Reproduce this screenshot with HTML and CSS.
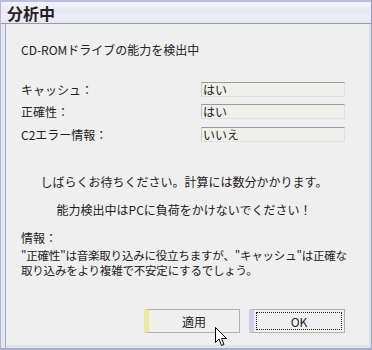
FILE: index.html
```html
<!DOCTYPE html>
<html lang="ja">
<head>
    <meta charset="UTF-8">
    <title>分析中</title>
    <link rel="stylesheet" href="styles.css">
</head>
<body>
    <div class="dialog">
        <div class="titlebar">分析中</div>

        <div class="content">
            <p class="status">CD-ROMドライブの能力を検出中</p>

            <div class="result-row">
                <span class="result-label">キャッシュ：</span>
                <span class="result-field">はい</span>
            </div>
            <div class="result-row">
                <span class="result-label">正確性：</span>
                <span class="result-field">はい</span>
            </div>
            <div class="result-row">
                <span class="result-label">C2エラー情報：</span>
                <span class="result-field">いいえ</span>
            </div>

            <p class="notice first">しばらくお待ちください。計算には数分かかります。</p>
            <p class="notice">能力検出中はPCに負荷をかけないでください！</p>

            <p class="info-title">情報：</p>
            <p class="info-text">"正確性"は音楽取り込みに役立ちますが、"キャッシュ"は正確な</p>
            <p class="info-text">取り込みをより複雑で不安定にするでしょう。</p>

            <div class="button-group">
                <button class="btn btn-apply"><span>適用</span></button>
                <button class="btn btn-ok"><span class="focus">OK</span></button>
            </div>
        </div>

        <svg class="cursor" width="13" height="20" viewBox="0 0 13 20">
            <path d="M0.5 0.5 L0.5 15.5 L4 12 L6.5 18.5 L9 17.5 L6.5 11.5 L11.5 11.5 Z" fill="#fff" stroke="#000" stroke-width="1"/>
        </svg>
    </div>
</body>
</html>
```

FILE: styles.css
```css
* {
    margin: 0;
    padding: 0;
    box-sizing: border-box;
}

body {
    font-family: "Noto Sans CJK JP", "Liberation Sans", sans-serif;
    font-size: 12px;
    color: #222;
    background: #f0f0f0;
}

.dialog {
    position: relative;
    width: 372px;
    height: 350px;
    background: #efefef;
    border-left: 1px solid #b4b8cc;
    border-right: 1px solid #9ea2b8;
    border-bottom: 2px solid #a8accc;
    box-shadow: inset 4px 0 0 #e6e8f2, inset 5px 0 0 #a9adc4, inset -2px 0 0 #dde0ec, inset 0 -3px 0 #e2e4ee;
    overflow: hidden;
}

.titlebar {
    height: 24px;
    padding: 1px 0 0 7px;
    font-size: 16px;
    font-weight: bold;
    line-height: 20px;
    color: #222;
    border-top: 2px solid #b8bce0;
    border-bottom: 1px solid #9a9ca8;
    background: linear-gradient(#f4f4fb 0%, #e8e8f6 40%, #eeeef8 70%, #e4e6f2 100%);
    margin-left: -1px;
}

.content {
    padding: 18px 24px 0 20px;
    line-height: 15px;
}

.status {
    margin-bottom: 25px;
}

.result-row {
    display: flex;
    align-items: center;
    height: 15px;
    margin-bottom: 7px;
}

.result-row:nth-child(3) {
    margin-bottom: 8px;
}

.result-label {
    width: 180px;
}

.result-field {
    flex: 1;
    height: 15px;
    line-height: 13px;
    padding-left: 1px;
    border-top: 1px solid #9a9a9a;
    border-left: 1px solid #c8c8c8;
    border-right: 1px solid #e0e0e8;
    border-bottom: 1px solid #e0e0e8;
    background: #f0f0ea;
    margin-right: 2px;
}

.notice {
    text-align: center;
    margin-bottom: 13px;
}

.notice.first {
    margin-top: 32px;
}

.info-title {
    margin-top: 11px;
    margin-bottom: 3px;
}

.info-text {
    white-space: nowrap;
    letter-spacing: -0.2px;
    font-size: 11.5px;
}

.button-group {
    display: flex;
    justify-content: flex-end;
    gap: 9px;
    margin-top: 31px;
    padding-right: 2px;
}

.btn {
    width: 96px;
    height: 24px;
    font-family: inherit;
    font-size: 12px;
    color: #222;
    background: #efefef;
    border: 1px solid #b0b0b0;
    border-left-width: 5px;
    display: flex;
    align-items: center;
    justify-content: center;
    padding: 2px;
}

.btn-apply {
    border-left-color: #f4e6a0;
}

.btn-ok {
    border-left-color: #cdd0ea;
}

.focus {
    display: flex;
    align-items: center;
    justify-content: center;
    width: 100%;
    height: 100%;
    border: 1px dotted #222;
}

.cursor {
    position: absolute;
    left: 214px;
    top: 327px;
}
```
